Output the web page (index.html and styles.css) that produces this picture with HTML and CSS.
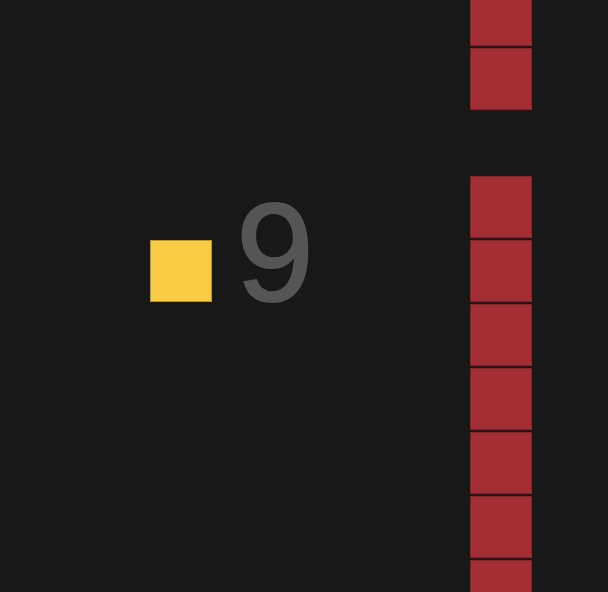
FILE: index.html
```html
<!DOCTYPE html>
<html>
<head>
<meta charset="utf-8">
<link rel="stylesheet" href="styles.css">
</head>
<body>
<div class="game">
  <div class="pipe">
    <div class="cell"></div>
    <div class="cell"></div>
    <div class="cell empty"></div>
    <div class="cell"></div>
    <div class="cell"></div>
    <div class="cell"></div>
    <div class="cell"></div>
    <div class="cell"></div>
    <div class="cell"></div>
    <div class="cell"></div>
  </div>
  <div class="bird"></div>
  <div class="score">9</div>
</div>
</body>
</html>
```
FILE: styles.css
```css
html, body {
  margin: 0;
  padding: 0;
  background: #181818;
}
.game {
  position: relative;
  width: 608px;
  height: 592px;
  overflow: hidden;
  background: #181818;
}
.pipe {
  position: absolute;
  left: 470px;
  top: -16px;
  width: 62px;
  display: flex;
  flex-direction: column;
  gap: 2px;
}
.cell {
  width: 62px;
  height: 62px;
  box-sizing: border-box;
  background: #a22e33;
  border: 1px solid #7e262a;
}
.cell.empty {
  background: transparent;
  border-color: transparent;
}
.bird {
  position: absolute;
  left: 150px;
  top: 240px;
  width: 62px;
  height: 62px;
  box-sizing: border-box;
  background: #f8cd45;
  border: 1px solid #b8952f;
}
.score {
  position: absolute;
  left: 236px;
  top: 173px;
  font-family: "Liberation Sans", Arial, sans-serif;
  font-size: 140px;
  line-height: 160px;
  color: #555555;
  -webkit-text-stroke: 2px #555555;
}
```
